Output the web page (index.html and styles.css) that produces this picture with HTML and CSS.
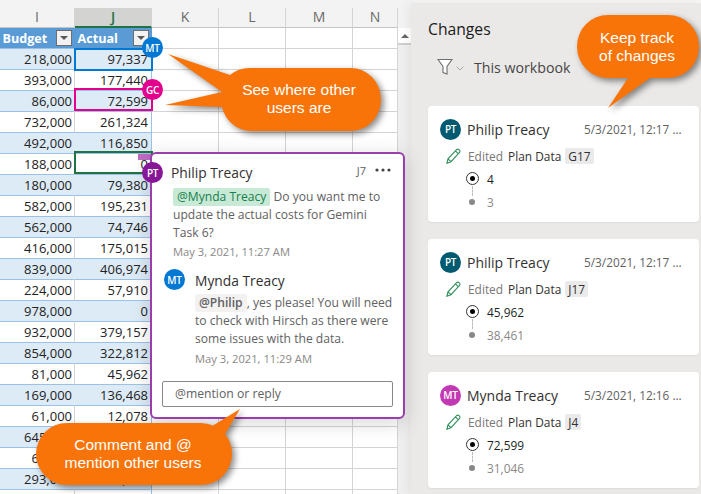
FILE: index.html
```html
<!DOCTYPE html>
<html lang="en">
<head>
<meta charset="utf-8">
<title>Changes</title>
<link rel="stylesheet" href="styles.css">
</head>
<body>
<div class="page">
  <section class="sheet">
    <div class="colheads">
      <div class="ch w-i">I</div><div class="ch w-j active">J</div><div class="ch w-k">K</div><div class="ch w-l">L</div><div class="ch w-m">M</div><div class="ch w-n">N</div>
    </div>
    <div class="grid">
      <div class="row">
        <div class="c w-i th">Budget<span class="fbtn"></span></div><div class="c w-j th">Actual<span class="fbtn"></span></div><div class="c w-k"></div><div class="c w-l"></div><div class="c w-m"></div><div class="c w-n"></div>
      </div>
      <div class="row odd"><div class="c w-i">218,000</div><div class="c w-j">97,337</div><div class="c w-k"></div><div class="c w-l"></div><div class="c w-m"></div><div class="c w-n"></div></div>
      <div class="row"><div class="c w-i">393,000</div><div class="c w-j">177,440</div><div class="c w-k"></div><div class="c w-l"></div><div class="c w-m"></div><div class="c w-n"></div></div>
      <div class="row odd"><div class="c w-i">86,000</div><div class="c w-j">72,599</div><div class="c w-k"></div><div class="c w-l"></div><div class="c w-m"></div><div class="c w-n"></div></div>
      <div class="row"><div class="c w-i">732,000</div><div class="c w-j">261,324</div><div class="c w-k"></div><div class="c w-l"></div><div class="c w-m"></div><div class="c w-n"></div></div>
      <div class="row odd"><div class="c w-i">492,000</div><div class="c w-j">116,850</div><div class="c w-k"></div><div class="c w-l"></div><div class="c w-m"></div><div class="c w-n"></div></div>
      <div class="row"><div class="c w-i">188,000</div><div class="c w-j">0</div><div class="c w-k"></div><div class="c w-l"></div><div class="c w-m"></div><div class="c w-n"></div></div>
      <div class="row odd"><div class="c w-i">180,000</div><div class="c w-j">79,380</div><div class="c w-k"></div><div class="c w-l"></div><div class="c w-m"></div><div class="c w-n"></div></div>
      <div class="row"><div class="c w-i">582,000</div><div class="c w-j">195,231</div><div class="c w-k"></div><div class="c w-l"></div><div class="c w-m"></div><div class="c w-n"></div></div>
      <div class="row odd"><div class="c w-i">562,000</div><div class="c w-j">74,746</div><div class="c w-k"></div><div class="c w-l"></div><div class="c w-m"></div><div class="c w-n"></div></div>
      <div class="row"><div class="c w-i">416,000</div><div class="c w-j">175,015</div><div class="c w-k"></div><div class="c w-l"></div><div class="c w-m"></div><div class="c w-n"></div></div>
      <div class="row odd"><div class="c w-i">839,000</div><div class="c w-j">406,974</div><div class="c w-k"></div><div class="c w-l"></div><div class="c w-m"></div><div class="c w-n"></div></div>
      <div class="row"><div class="c w-i">224,000</div><div class="c w-j">57,910</div><div class="c w-k"></div><div class="c w-l"></div><div class="c w-m"></div><div class="c w-n"></div></div>
      <div class="row odd"><div class="c w-i">978,000</div><div class="c w-j">0</div><div class="c w-k"></div><div class="c w-l"></div><div class="c w-m"></div><div class="c w-n"></div></div>
      <div class="row"><div class="c w-i">932,000</div><div class="c w-j">379,157</div><div class="c w-k"></div><div class="c w-l"></div><div class="c w-m"></div><div class="c w-n"></div></div>
      <div class="row odd"><div class="c w-i">854,000</div><div class="c w-j">322,812</div><div class="c w-k"></div><div class="c w-l"></div><div class="c w-m"></div><div class="c w-n"></div></div>
      <div class="row"><div class="c w-i">81,000</div><div class="c w-j">45,962</div><div class="c w-k"></div><div class="c w-l"></div><div class="c w-m"></div><div class="c w-n"></div></div>
      <div class="row odd"><div class="c w-i">169,000</div><div class="c w-j">136,468</div><div class="c w-k"></div><div class="c w-l"></div><div class="c w-m"></div><div class="c w-n"></div></div>
      <div class="row"><div class="c w-i">61,000</div><div class="c w-j">12,078</div><div class="c w-k"></div><div class="c w-l"></div><div class="c w-m"></div><div class="c w-n"></div></div>
      <div class="row odd"><div class="c w-i">645,000</div><div class="c w-j"></div><div class="c w-k"></div><div class="c w-l"></div><div class="c w-m"></div><div class="c w-n"></div></div>
      <div class="row"><div class="c w-i">61,000</div><div class="c w-j"></div><div class="c w-k"></div><div class="c w-l"></div><div class="c w-m"></div><div class="c w-n"></div></div>
      <div class="row odd"><div class="c w-i">293,000</div><div class="c w-j">212,000</div><div class="c w-k"></div><div class="c w-l"></div><div class="c w-m"></div><div class="c w-n"></div></div>
      <div class="row"><div class="c w-i"></div><div class="c w-j"></div><div class="c w-k"></div><div class="c w-l"></div><div class="c w-m"></div><div class="c w-n"></div></div>
    </div>
    <div class="scrollbar"><div class="sb-up"></div></div>
  </section>

  <aside class="panel">
    <h2 class="panel-title">Changes</h2>
    <div class="filter">
      <svg class="funnel" width="16" height="18" viewBox="0 0 16 18"><path d="M1 1.500h14l-5 7v7.500l-4-1.500v-6z" fill="#fff" stroke="#6e6e6e" stroke-width="1.100"/></svg>
      <svg class="chev" width="8" height="5" viewBox="0 0 8 5"><path d="M.5.5 4 4 7.500.5" fill="none" stroke="#a6a6a6"/></svg>
      <span class="filter-label">This workbook</span>
    </div>
    <article class="card">
      <div class="card-head"><span class="av av-pt">PT</span><span class="who">Philip Treacy</span><span class="when">5/3/2021, 12:17 ...</span></div>
      <div class="edit">
        <svg class="pencil" width="15" height="16" viewBox="0 0 15 16"><path d="M.9 15.200 2 10.800 10.600 1.600a1.600 1.600 0 0 1 2.300 0l.6.6a1.600 1.600 0 0 1 0 2.300L5 13.700zM2 10.800l3 2.900M9.400 2.900l3 2.900" fill="none" stroke="#2f8f5b" stroke-width="1.100"/></svg>
        <span class="edited">Edited</span><span class="sheetname">Plan Data</span><span class="ref">G17</span>
      </div>
      <div class="vals">
        <div class="val"><span class="radio"></span><span>4</span></div>
        <div class="val old"><span class="dot"></span><span>3</span></div>
      </div>
    </article>
    <article class="card">
      <div class="card-head"><span class="av av-pt">PT</span><span class="who">Philip Treacy</span><span class="when">5/3/2021, 12:17 ...</span></div>
      <div class="edit">
        <svg class="pencil" width="15" height="16" viewBox="0 0 15 16"><path d="M.9 15.200 2 10.800 10.600 1.600a1.600 1.600 0 0 1 2.300 0l.6.6a1.600 1.600 0 0 1 0 2.300L5 13.700zM2 10.800l3 2.900M9.400 2.900l3 2.900" fill="none" stroke="#2f8f5b" stroke-width="1.100"/></svg>
        <span class="edited">Edited</span><span class="sheetname">Plan Data</span><span class="ref">J17</span>
      </div>
      <div class="vals">
        <div class="val"><span class="radio"></span><span>45,962</span></div>
        <div class="val old"><span class="dot"></span><span>38,461</span></div>
      </div>
    </article>
    <article class="card">
      <div class="card-head"><span class="av av-mt2">MT</span><span class="who">Mynda Treacy</span><span class="when">5/3/2021, 12:16 ...</span></div>
      <div class="edit">
        <svg class="pencil" width="15" height="16" viewBox="0 0 15 16"><path d="M.9 15.200 2 10.800 10.600 1.600a1.600 1.600 0 0 1 2.300 0l.6.6a1.600 1.600 0 0 1 0 2.300L5 13.700zM2 10.800l3 2.900M9.400 2.900l3 2.900" fill="none" stroke="#2f8f5b" stroke-width="1.100"/></svg>
        <span class="edited">Edited</span><span class="sheetname">Plan Data</span><span class="ref">J4</span>
      </div>
      <div class="vals">
        <div class="val"><span class="radio"></span><span>72,599</span></div>
        <div class="val old"><span class="dot"></span><span>31,046</span></div>
      </div>
    </article>
  </aside>
</div>

<div class="sel sel-mt"></div>
<div class="sel sel-gc"></div>
<div class="sel sel-cur"></div>
<div class="comment-flag"></div>

<section class="comment">
  <div class="c-head">
    <span class="c-name">Philip Treacy</span>
    <span class="c-ref">J7</span>
    <svg class="c-more" width="16" height="4" viewBox="0 0 16 4"><circle cx="2" cy="2" r="1.600"/><circle cx="8" cy="2" r="1.600"/><circle cx="14" cy="2" r="1.600"/></svg>
  </div>
  <p class="c-text"><span class="mention">@Mynda Treacy</span> Do you want me to update the actual costs for Gemini Task 6?</p>
  <div class="c-time">May 3, 2021, 11:27 AM</div>
  <div class="reply">
    <span class="av av-mt">MT</span>
    <div class="reply-body">
      <div class="c-name">Mynda Treacy</div>
      <p class="c-text r-text"><span class="mention2">@Philip</span>, yes please! You will need to check with Hirsch as there were some issues with the data.</p>
      <div class="c-time">May 3, 2021, 11:29 AM</div>
    </div>
  </div>
  <div class="c-input">@mention or reply</div>
</section>

<span class="av pin pin-mt">MT</span>
<span class="av pin pin-gc">GC</span>
<span class="av pin pin-pt">PT</span>

<svg class="callouts" width="701" height="494" viewBox="0 0 701 494">
  <path class="shape" d="M251 68H351a30 31.500 0 0 1 30 31.500a30 31.500 0 0 1-30 31.500H251a30 31.500 0 0 1-29-24L165 105l57-13L168 54l62 21a30 30 0 0 1 21-7z"/>
  <path class="shape" d="M608 15h60a31 31 0 0 1 31 31v1a31 31 0 0 1-31 31h-18l-42 30 20-30h-20a31 31 0 0 1-31-31v-1a31 31 0 0 1 31-31z"/>
  <path class="shape" d="M67 423H201a31 31 0 0 1 12 2.500L240 409 225 434a31 31 0 0 1 7 20 31 31 0 0 1-31 31H67a31 31 0 0 1-31-31 31 31 0 0 1 31-31z"/>
</svg>
<div class="note note-1">See where other<br>users are</div>
<div class="note note-2">Keep track<br>of changes</div>
<div class="note note-3">Comment and @<br>mention other users</div>
</body>
</html>
```

FILE: styles.css
```css
* { box-sizing: border-box; }
html, body { margin: 0; padding: 0; }
body {
  width: 701px;
  height: 494px;
  overflow: hidden;
  position: relative;
  background: #f5f5f5;
  font-family: "Open Sans", "Noto Sans", sans-serif;
  color: #323130;
}
.page { display: flex; width: 701px; height: 494px; }

/* sheet */
.sheet {
  position: relative;
  width: 411px;
  flex: none;
  padding-top: 8px;
  overflow: hidden;
  background: #f3f3f3;
}
.colheads { display: flex; height: 20px; }
.ch {
  text-align: center;
  font: 14px/18px "Open Sans", sans-serif;
  color: #6a6a6a;
  border-right: 1px solid #d4d4d4;
  border-bottom: 1px solid #c4c4c4;
}
.ch.active {
  background: #d3d3d2;
  color: #217346;
  font-weight: 600;
  border-bottom: 2px solid #217346;
}
.w-i { width: 75px; }
.w-j { width: 77px; }
.w-k, .w-l, .w-m { width: 67px; }
.w-n { width: 45px; }
.grid { width: 398px; background: #fff; }
.row { display: flex; height: 21px; }
.c {
  flex: none;
  height: 21px;
  border-right: 1px solid #d4d4d4;
  border-bottom: 1px solid #d4d4d4;
}
.w-i, .w-j {
  position: relative;
  text-align: right;
  font: 13px/21px "Open Sans", sans-serif;
  padding-right: 2px;
  color: #222;
  border-bottom-color: #9bc2e6;
}
.c.w-j { border-right-color: #9bc2e6; padding-right: 3px; }
.ch.w-i, .ch.w-j { text-align: center; padding: 0; font-size: 14px; line-height: 18px; }
.ch.w-i { color: #6a6a6a; border-bottom-color: #c4c4c4; }
.ch.w-j { color: #217346; border-bottom-color: #217346; border-right-color: #d4d4d4; }
.odd .w-i, .odd .w-j { background: #ddebf7; }
.odd .w-i { border-right-color: #ddebf7; }
.c.th {
  background: #5b9bd5;
  color: #fff;
  font-weight: 700;
  font-size: 12.6px;
  line-height: 21px;
  text-align: left;
  padding: 0 0 0 2.500px;
  border-bottom-color: #9bc2e6;
  border-right-color: #5b9bd5;
}
.fbtn {
  position: absolute;
  right: 2px;
  top: 2px;
  width: 16px;
  height: 16px;
  background: #f2f2f2;
  border: 1px solid #6f6f6f;
}
.fbtn::after {
  content: "";
  position: absolute;
  left: 3px;
  top: 5px;
  border-left: 4px solid transparent;
  border-right: 4px solid transparent;
  border-top: 4px solid #595959;
}
.scrollbar {
  position: absolute;
  left: 398px;
  top: 28px;
  width: 13px;
  bottom: 0;
  background: #efefef;
}
.sb-up { height: 17px; background: #fff; border-bottom: 2px solid #d0d0d0; position: relative; }
.sb-up::after {
  content: "";
  position: absolute;
  left: 3px;
  top: 6px;
  border-left: 4px solid transparent;
  border-right: 4px solid transparent;
  border-bottom: 4px solid #666;
}

/* panel */
.panel {
  flex: 1;
  margin-top: 3px;
  padding: 0 2px 0 17px;
  background: #eae9e8;
  box-shadow: -3px 0 10px rgba(0, 0, 0, .06);
  position: relative;
  overflow: hidden;
}
.panel-title { margin: 14px 0 0; font: 400 15.7px/24px "Open Sans", sans-serif; color: #1a1a1a; }
.filter { display: flex; align-items: center; height: 20px; margin: 16px 0 0 9px; }
.funnel { flex: none; }
.chev { flex: none; margin: 3px 0 0 3px; }
.filter-label { margin-left: 10px; font-size: 14.200px; color: #484644; }
.card {
  height: 116px;
  margin-top: 17px;
  padding: 12px 0 0 12px;
  background: #fff;
  border-radius: 4px;
  box-shadow: 0 1px 2px rgba(0, 0, 0, .06);
}
.filter + .card { margin-top: 29px; }
.card-head { display: flex; align-items: center; height: 22px; }
.av {
  display: inline-flex;
  align-items: center;
  justify-content: center;
  flex: none;
  width: 21px;
  height: 21px;
  border-radius: 50%;
  color: #fff;
  font: 600 10px/1 "Open Sans", sans-serif;
  letter-spacing: -.3px;
}
.av-pt { background: #005b70; }
.av-mt2 { background: #c239b3; }
.av-mt { background: #0078d4; }
.who { margin-left: 6px; width: 117px; font-size: 14px; color: #323130; white-space: nowrap; }
.when { font-size: 11.8px; color: #616161; white-space: nowrap; }
.edit { display: flex; align-items: center; height: 18px; margin-top: 7px; padding-left: 6px; font-size: 11.9px; }
.pencil { flex: none; margin-right: 7px; }
.edited { color: #797775; }
.sheetname { margin-left: 5px; color: #323130; }
.ref { margin-left: 4px; padding: 0 3px; height: 16px; line-height: 16px; background: #eaeaea; border-radius: 2px; }
.vals { margin: 2px 0 0 26px; font-size: 11.9px; color: #201f1e; }
.val { display: flex; align-items: center; height: 23px; position: relative; }
.val.old { color: #8a8886; }
.radio {
  flex: none;
  width: 13px;
  height: 13px;
  margin-right: 8px;
  border: 1px solid #333;
  border-radius: 50%;
  position: relative;
}
.radio::after {
  content: "";
  position: absolute;
  left: 3px;
  top: 3px;
  width: 5px;
  height: 5px;
  background: #000;
  border-radius: 50%;
}
.radio::before {
  content: "";
  position: absolute;
  left: 5px;
  top: 13px;
  height: 10px;
  border-left: 1px dashed #bbb;
}
.dot {
  flex: none;
  width: 6px;
  height: 6px;
  margin: 0 12px 0 3px;
  background: #8a8886;
  border-radius: 50%;
}

/* selections */
.sel { position: absolute; left: 74px; width: 79px; height: 23px; border: 2px solid; }
.sel-mt { top: 48px; border-color: #0078d4; }
.sel-gc { top: 88px; border-color: #e3008c; }
.sel-cur { top: 151px; border-color: #217346; }
.comment-flag { position: absolute; left: 138px; top: 154px; width: 13px; height: 6px; background: #c06cc4; }

/* comment */
.comment {
  position: absolute;
  left: 150px;
  top: 152px;
  width: 255px;
  height: 267px;
  padding: 9px 10px 0 21px;
  background: #fff;
  border: 2px solid #9a3eab;
  border-radius: 6px;
  box-shadow: 0 4px 20px rgba(0, 0, 0, .16);
  font-size: 12px;
  color: #616161;
}
.c-head { display: flex; align-items: center; height: 20px; margin-left: -2px; position: relative; }
.c-name { font-size: 13.8px; line-height: 20px; color: #323130; white-space: nowrap; }
.c-head .c-name { flex: 1; }
.c-ref { font-size: 11px; color: #616161; margin-right: 9px; margin-top: -5px; }
.c-more { fill: #444; margin-top: -7px; margin-right: 2px; }
.c-text { margin: 5px 0 0; font-size: 12.1px; line-height: 18px; width: 222px; }
.mention { display: inline-block; background: #c7e9d6; color: #17804c; padding: 0 4px; border-radius: 2px; }
.mention2 { display: inline-block; background: #f3f2f1; color: #616161; font-weight: 600; padding: 0 4px; border-radius: 2px; }
.c-time { margin-top: 1px; font-size: 11.2px; line-height: 18px; color: #8a8886; white-space: nowrap; }
.reply { display: flex; margin: 4px 0 0 -9px; gap: 10px; }
.reply .av { margin-top: 4px; }
.reply-body { flex: 1; padding-top: 6px; }
.reply-body .c-time { margin-top: 2px; }
.r-text { margin-top: 3px; width: 200px; }
.c-input {
  position: absolute;
  left: 10px;
  top: 227px;
  width: 231px;
  height: 26px;
  padding-left: 12px;
  border: 1px solid #8a8886;
  border-radius: 2px;
  font-size: 12.2px;
  line-height: 24px;
  color: #616161;
}

/* overlays */
.pin { position: absolute; }
.pin-mt { left: 142px; top: 37px; background: #0078d4; }
.pin-gc { left: 142px; top: 79px; background: #e3008c; }
.pin-pt { left: 142px; top: 162px; background: #881798; }
.callouts { position: absolute; left: 0; top: 0; pointer-events: none; }
.shape { fill: #f97408; filter: drop-shadow(3px 3px 3px rgba(0, 0, 0, .45)); }
.note {
  position: absolute;
  color: #fff;
  font: 15.5px/18px "Liberation Sans", Arial, sans-serif;
  text-align: center;
  white-space: nowrap;
}
.note-1 { left: 221px; top: 81px; width: 156px; }
.note-2 { left: 577px; top: 29px; width: 120px; }
.note-3 { left: 36px; top: 436px; width: 194px; }
```
